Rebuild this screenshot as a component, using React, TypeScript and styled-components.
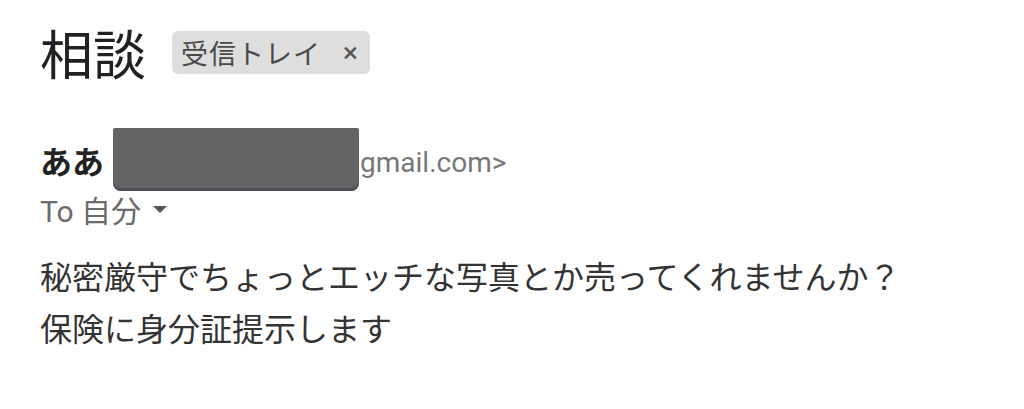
import React from "react";
import styled, { createGlobalStyle } from "styled-components";

const Global = createGlobalStyle`
  html, body {
    margin: 0;
    padding: 0;
    background: #ffffff;
  }
  body {
    font-family: "Roboto", "Noto Sans CJK JP", sans-serif;
  }
`;

const Page = styled.div`
  width: 1024px;
  height: 409px;
  overflow: hidden;
  padding: 22px 0 0 40px;
  box-sizing: border-box;
  background: #fff;
`;

const Header = styled.div`
  display: flex;
  align-items: center;
  gap: 26px;
  height: 60px;
`;

const Subject = styled.h1`
  margin: 0;
  font-family: "Noto Sans CJK JP", sans-serif;
  font-weight: 400;
  font-size: 53px;
  line-height: 1;
  color: #202124;
`;

const Label = styled.span`
  display: inline-flex;
  align-items: center;
  gap: 22px;
  height: 43px;
  padding: 0 11px 0 9px;
  border-radius: 6px;
  background: #dedede;
  color: #4a4a4a;
  font-family: "Noto Sans CJK JP", sans-serif;
  font-size: 27px;
  letter-spacing: 1px;
  line-height: 1;
`;

const Close = styled.span`
  font-family: "Roboto", sans-serif;
  font-size: 28px;
  color: #555;
  margin-top: 1px;
`;

const Sender = styled.div`
  display: flex;
  align-items: center;
  margin-top: 46px;
  height: 63px;
`;

const Name = styled.span`
  font-family: "Noto Sans CJK JP", sans-serif;
  font-weight: 700;
  font-size: 32px;
  color: #222;
  margin-right: 9px;
`;

const Redacted = styled.span`
  display: inline-block;
  width: 246px;
  height: 63px;
  background: #646466;
  border-radius: 2px 2px 8px 8px;
  box-shadow: inset 0 -3px 0 #4e4e56;
`;

const Address = styled.span`
  font-family: "Roboto", sans-serif;
  font-size: 28px;
  color: #777;
  margin-top: 6px;
  margin-left: 1px;
`;

const Recipient = styled.div`
  display: flex;
  align-items: center;
  gap: 10px;
  height: 36px;
  color: #6b6b6b;
  font-family: "Roboto", "Noto Sans CJK JP", sans-serif;
  font-size: 30px;
`;

const Caret = styled.svg`
  width: 18px;
  height: 10px;
  margin-top: 2px;
`;

const Body = styled.div`
  margin-top: 22px;
  font-family: "Noto Sans CJK JP", sans-serif;
  font-size: 32px;
  line-height: 52px;
  color: #333;
`;

export default function App() {
  return (
    <>
      <Global />
      <Page>
        <Header>
          <Subject>相談</Subject>
          <Label>
            受信トレイ
            <Close>×</Close>
          </Label>
        </Header>
        <Sender>
          <Name>ああ</Name>
          <Redacted />
          <Address>gmail.com&gt;</Address>
        </Sender>
        <Recipient>
          To 自分
          <Caret viewBox="0 0 18 10">
            <path d="M2 1 L16 1 L9 8 Z" fill="#555" />
          </Caret>
        </Recipient>
        <Body>
          秘密厳守でちょっとエッチな写真とか売ってくれませんか？
          <br />
          保険に身分証提示します
        </Body>
      </Page>
    </>
  );
}
